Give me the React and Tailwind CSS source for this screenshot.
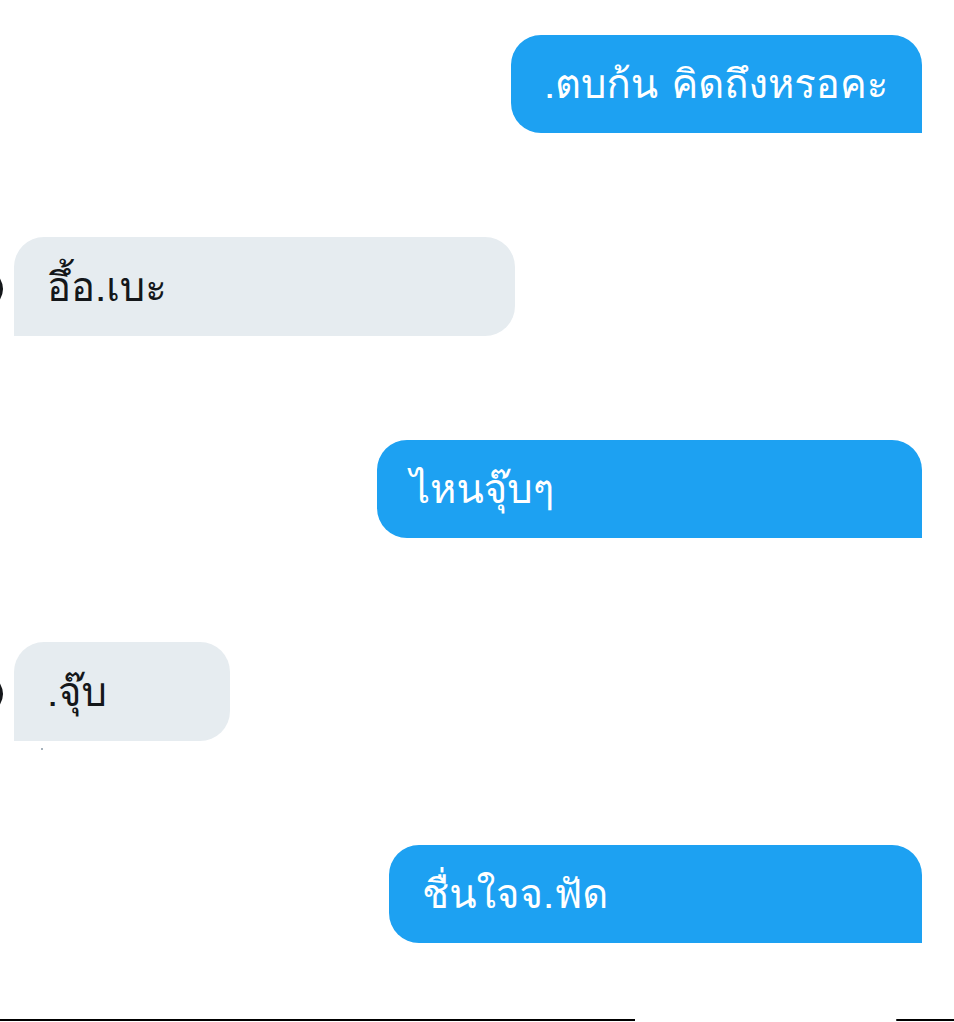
const messages = [
  { id: 1, mine: true, text: ".ตบก้น คิดถึงหรอคะ", width: "w-[411px]" },
  { id: 2, mine: false, text: "อึ้อ.เบะ", width: "w-[501px]" },
  { id: 3, mine: true, text: "ไหนจุ๊บๆ", width: "w-[545px]" },
  { id: 4, mine: false, text: ".จุ๊บ", width: "w-[216px]", dot: true },
  { id: 5, mine: true, text: "ชื่นใจจ.ฟัด", width: "w-[533px]" },
];

const Bubble = ({ mine, text, width, dot }) => {
  if (mine) {
    return (
      <div className="flex justify-end pr-[32px]">
        <div
          className={`${width} h-[98px] flex items-center pl-[33px] rounded-[30px] rounded-br-none bg-[#1da1f2] text-white text-[40px]`}
        >
          {text}
        </div>
      </div>
    );
  }
  return (
    <div className="relative flex justify-start pl-[14px]">
      {/* edge of the avatar, cut off by the screen */}
      <svg
        className="absolute left-0 top-[40px]"
        width="6"
        height="24"
        viewBox="0 0 6 24"
      >
        <path d="M-2 1 Q5 12 -2 23" stroke="#14171a" strokeWidth="3" fill="none" />
      </svg>
      <div
        className={`${width} h-[99px] flex items-center pl-[33px] rounded-[30px] rounded-bl-none bg-[#e6ecf0] text-[#14171a] text-[40px]`}
      >
        {text}
      </div>
      {dot && (
        <div className="absolute left-[41px] top-[106px] w-[2px] h-[2px] rounded-full bg-[#8899a6]" />
      )}
    </div>
  );
};

const App = () => {
  return (
    <div className="min-h-[1022px] bg-white flex flex-col overflow-hidden font-['Loma','Noto_Sans_Thai',sans-serif]">
      <div className="flex flex-col gap-[104px] pt-[35px]">
        {messages.map((m) => (
          <Bubble key={m.id} {...m} />
        ))}
      </div>

      <div className="mt-auto flex items-end h-[4px] mb-[1px]">
        <div className="w-[635px] h-[2px] bg-black" />
        <div className="flex-1" />
        <div className="w-[58px] h-[2px] bg-black rounded-l-full" />
      </div>
    </div>
  );
};

export default App;
